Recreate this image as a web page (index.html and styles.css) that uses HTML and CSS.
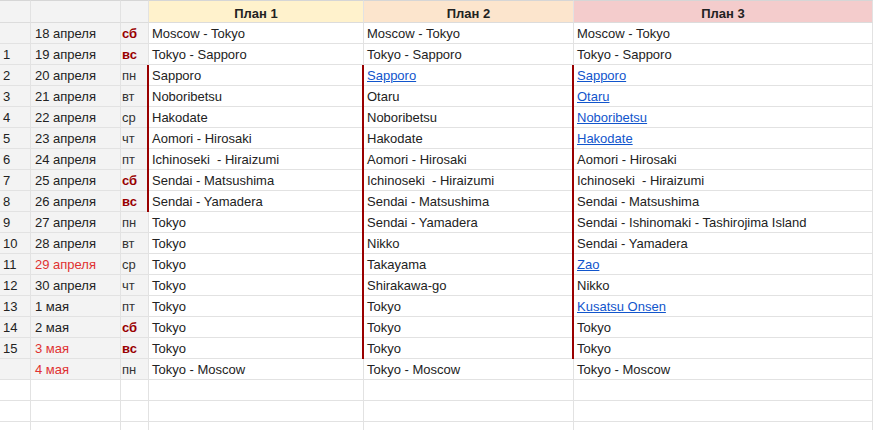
FILE: index.html
```html
<!DOCTYPE html>
<html lang="ru">
<head>
<meta charset="utf-8">
<title>Планы</title>
<link rel="stylesheet" href="styles.css">
</head>
<body>
<div class="sheet">
  <div class="c hd side"></div><div class="c hd side"></div><div class="c hd side"></div>
  <div class="c hd p1">План 1</div><div class="c hd p2">План 2</div><div class="c hd p3">План 3</div>

  <div class="c side num"></div><div class="c side date">18 апреля</div><div class="c side day we">сб</div>
  <div class="c">Moscow - Tokyo</div><div class="c">Moscow - Tokyo</div><div class="c">Moscow - Tokyo</div>

  <div class="c side num">1</div><div class="c side date">19 апреля</div><div class="c side day we">вс</div>
  <div class="c">Tokyo - Sapporo</div><div class="c">Tokyo - Sapporo</div><div class="c">Tokyo - Sapporo</div>

  <div class="c side num">2</div><div class="c side date">20 апреля</div><div class="c side day">пн</div>
  <div class="c mark">Sapporo</div><div class="c mark"><a href="#">Sapporo</a></div><div class="c mark"><a href="#">Sapporo</a></div>

  <div class="c side num">3</div><div class="c side date">21 апреля</div><div class="c side day">вт</div>
  <div class="c mark">Noboribetsu</div><div class="c mark">Otaru</div><div class="c mark"><a href="#">Otaru</a></div>

  <div class="c side num">4</div><div class="c side date">22 апреля</div><div class="c side day">ср</div>
  <div class="c mark">Hakodate</div><div class="c mark">Noboribetsu</div><div class="c mark"><a href="#">Noboribetsu</a></div>

  <div class="c side num">5</div><div class="c side date">23 апреля</div><div class="c side day">чт</div>
  <div class="c mark">Aomori - Hirosaki</div><div class="c mark">Hakodate</div><div class="c mark"><a href="#">Hakodate</a></div>

  <div class="c side num">6</div><div class="c side date">24 апреля</div><div class="c side day">пт</div>
  <div class="c mark">Ichinoseki  - Hiraizumi</div><div class="c mark">Aomori - Hirosaki</div><div class="c mark">Aomori - Hirosaki</div>

  <div class="c side num">7</div><div class="c side date">25 апреля</div><div class="c side day we">сб</div>
  <div class="c mark">Sendai - Matsushima</div><div class="c mark">Ichinoseki  - Hiraizumi</div><div class="c mark">Ichinoseki  - Hiraizumi</div>

  <div class="c side num">8</div><div class="c side date">26 апреля</div><div class="c side day we">вс</div>
  <div class="c mark">Sendai - Yamadera</div><div class="c mark">Sendai - Matsushima</div><div class="c mark">Sendai - Matsushima</div>

  <div class="c side num">9</div><div class="c side date">27 апреля</div><div class="c side day">пн</div>
  <div class="c">Tokyo</div><div class="c mark">Sendai - Yamadera</div><div class="c mark">Sendai - Ishinomaki - Tashirojima Island</div>

  <div class="c side num">10</div><div class="c side date">28 апреля</div><div class="c side day">вт</div>
  <div class="c">Tokyo</div><div class="c mark">Nikko</div><div class="c mark">Sendai - Yamadera</div>

  <div class="c side num">11</div><div class="c side date hol">29 апреля</div><div class="c side day">ср</div>
  <div class="c">Tokyo</div><div class="c mark">Takayama</div><div class="c mark"><a href="#">Zao</a></div>

  <div class="c side num">12</div><div class="c side date">30 апреля</div><div class="c side day">чт</div>
  <div class="c">Tokyo</div><div class="c mark">Shirakawa-go</div><div class="c mark">Nikko</div>

  <div class="c side num">13</div><div class="c side date">1 мая</div><div class="c side day">пт</div>
  <div class="c">Tokyo</div><div class="c mark">Tokyo</div><div class="c mark"><a href="#">Kusatsu Onsen</a></div>

  <div class="c side num">14</div><div class="c side date">2 мая</div><div class="c side day we">сб</div>
  <div class="c">Tokyo</div><div class="c mark">Tokyo</div><div class="c mark">Tokyo</div>

  <div class="c side num">15</div><div class="c side date hol">3 мая</div><div class="c side day we">вс</div>
  <div class="c">Tokyo</div><div class="c mark">Tokyo</div><div class="c mark">Tokyo</div>

  <div class="c side num"></div><div class="c side date hol">4 мая</div><div class="c side day">пн</div>
  <div class="c">Tokyo - Moscow</div><div class="c">Tokyo - Moscow</div><div class="c">Tokyo - Moscow</div>

  <div class="c"></div><div class="c"></div><div class="c"></div><div class="c"></div><div class="c"></div><div class="c"></div>
  <div class="c"></div><div class="c"></div><div class="c"></div><div class="c"></div><div class="c"></div><div class="c"></div>
  <div class="c"></div><div class="c"></div><div class="c"></div><div class="c"></div><div class="c"></div><div class="c"></div>
</div>
</body>
</html>
```

FILE: styles.css
```css
html, body {
  margin: 0;
  padding: 0;
  background: #ffffff;
  overflow: hidden;
}

.sheet {
  display: grid;
  grid-template-columns: 31px 90px 28px 215px 210px 1fr;
  grid-template-rows: 23px;
  grid-auto-rows: 21px;
  width: 873px;
  font-family: "Liberation Sans", Arial, sans-serif;
  font-size: 13px;
  line-height: 15px;
  color: #222222;
}

.c {
  box-sizing: border-box;
  border-right: 1px solid #e2e2e2;
  border-bottom: 1px solid #e2e2e2;
  padding: 0 3px 2px 3px;
  display: flex;
  align-items: flex-end;
  white-space: pre;
  overflow: hidden;
  background: #ffffff;
}

.hd {
  border-top: 1px solid #d6d6d6;
  border-bottom-color: #dcdcdc;
  font-weight: bold;
  justify-content: center;
  padding-bottom: 1px;
}

.side {
  background: #f3f3f3;
}

.p1 { background: #fff2cc; }
.p2 { background: #fce5cd; }
.p3 { background: #f4cccc; }

.date { padding-left: 4px; }

.day {
  padding-left: 1px;
  color: #333333;
}

.we {
  color: #990000;
  font-weight: bold;
}

.hol { color: #e03131; }

.mark {
  box-shadow: -2px 0 0 #990000;
}

.c a {
  color: #1155cc;
  text-decoration: underline;
}
```
